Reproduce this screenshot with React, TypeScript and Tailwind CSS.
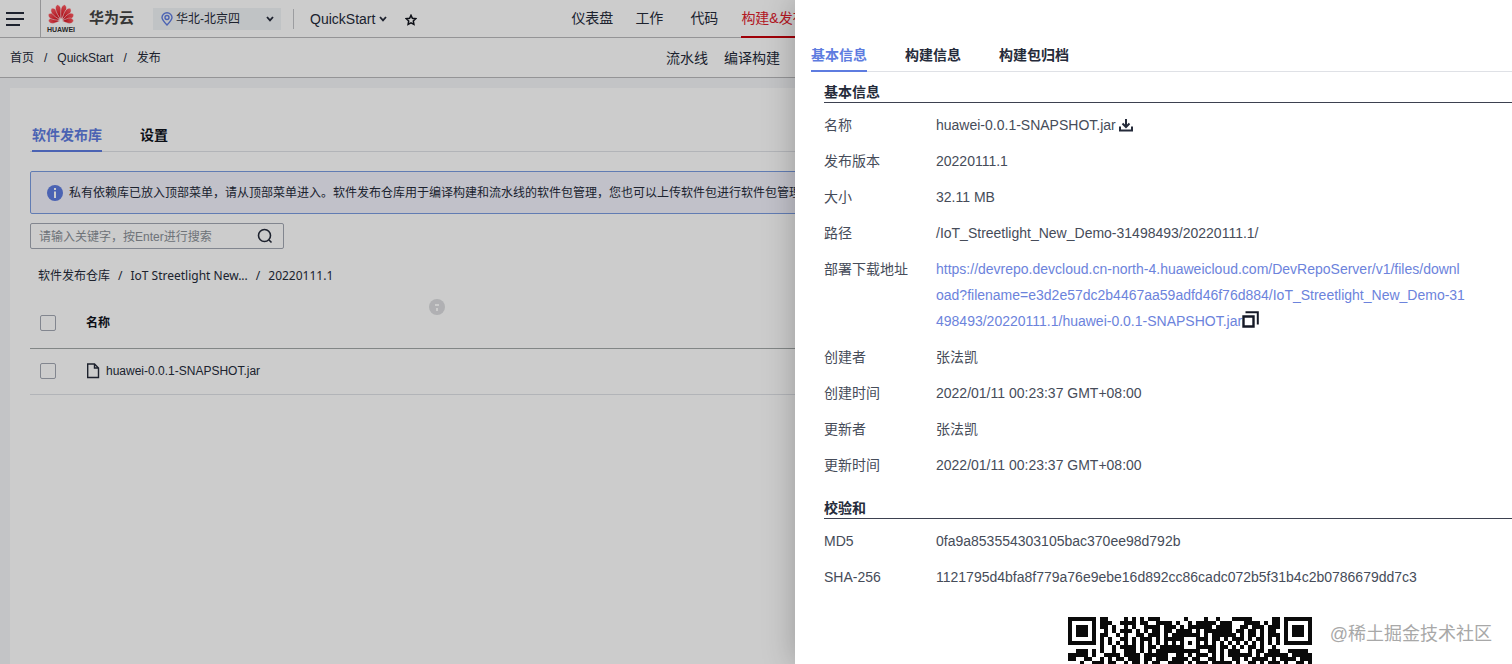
import { ReactNode } from 'react'

const finder = ['#######', '#.....#', '#.###.#', '#.###.#', '#.###.#', '#.....#', '#######']

const qrTop = [
    '.##....#.#.#.###......#....#..#...#####.....##.',
    '.###..####.##..####.#..#.#####.###...####.#.##.',
    '.##.#..#.#..####.###.#.######.####..##.###.###.',
    '..#.#.###.#.#.##.##.####.#.#######.##.##.#.##..',
    '.##..#.#..##.###.#.#######.#.######.#.##.#.###.',
    '.#.#..##.#.###.#.#####...###.##.#.###.#.##.#.#.',
    '.#.#.#.#.#.#.#.#.#.#.#.#.#.#.#.#.#.#.#.#.#.#.#.'
]

const qrRows = [
    ...qrTop.map((row, i) => finder[i] + row + finder[i]),
    '........#..#.####.#.##.######...#####.##.#.#.##.#..#.........',
    '..###.#.#..#..###.#.#.###########..##.#.###..#.##.###..#####.',
    '#####.#..####.####.######..##.#.###.#.#.######.#.######.#####',
    '##..##..#.#.##.###.##.###.####.##..##.#..##.#.####.#.####.###',
    '...#..###.##..#.##.#.##..####.#.###.#####.#..##.#.###.#..##.#'
]

const QrCode = () => (
    <svg viewBox="0 0 61 12" className="w-[244px] h-12 shrink-0" shapeRendering="crispEdges">
        {qrRows.map((row, y) =>
            row.split('').map((cell, x) =>
                cell === '#' ? <rect key={`${x}-${y}`} x={x} y={y} width="1" height="1" fill="#0a0a0a" /> : null
            )
        )}
    </svg>
)

const HuaweiLogo = () => (
    <div className="flex flex-col items-center w-10">
        <svg viewBox="0 0 28 22" className="w-7 h-[22px]">
            <defs>
                <radialGradient id="petal" gradientUnits="userSpaceOnUse" cx="0" cy="-14" r="13">
                    <stop offset="0" stopColor="#ff5a62" />
                    <stop offset="1" stopColor="#d0000f" />
                </radialGradient>
            </defs>
            {[
                [-88, 0.86],
                [-62, 0.98],
                [-37, 1.08],
                [-13, 1.15],
                [13, 1.15],
                [37, 1.08],
                [62, 0.98],
                [88, 0.86]
            ].map(([angle, length]) => (
                <path
                    key={angle}
                    d="M0 -1.500C-1.200 -4 -3 -8 -2.800 -11C-2.600 -13 -1.300 -14.200 0 -14.600C1.300 -14.200 2.600 -13 2.800 -11C3 -8 1.200 -4 0 -1.500Z"
                    fill="url(#petal)"
                    stroke="#fff"
                    strokeWidth=".5"
                    transform={`translate(14 18) rotate(${angle}) scale(.96 ${length})`}
                />
            ))}
        </svg>
        <span className="mt-px text-[7px] leading-[8px] font-bold text-[#333]">HUAWEI</span>
    </div>
)

const Chevron = () => (
    <svg viewBox="0 0 8 6" className="w-2 h-[6px]" fill="none" stroke="#252b3a" strokeWidth="1.8">
        <path d="M1 1l3 3.4L7 1" />
    </svg>
)

const Header = () => (
    <header className="flex items-center h-[38px] border-b border-[#b9babc] bg-white whitespace-nowrap">
        <button aria-label="菜单" className="flex items-center w-10 h-full pl-[6px] shrink-0">
            <svg viewBox="0 0 18 16" className="w-[18px] h-4" stroke="#252b3a" strokeWidth="2">
                <path d="M0 2h18M0 8h18M0 14h14" />
            </svg>
        </button>
        <a href="#" className="flex items-center h-full border-l border-[#b9babc] shrink-0">
            <HuaweiLogo />
            <span className="ml-2 text-[15px] font-bold text-[#444]">华为云</span>
        </a>
        <div className="relative flex items-center ml-[19px] h-[22px] w-[128px] bg-[#f1f4f7] shrink-0">
            <svg viewBox="0 0 12 14" className="absolute left-2 w-3 h-[14px]" fill="none" stroke="#5e7ce0" strokeWidth="1.4">
                <path d="M6 13C3 10 1 8 1 5.600a5 4.800 0 0 1 10 0C11 8 9 10 6 13Z" />
                <circle cx="6" cy="5.500" r="2" />
            </svg>
            <select aria-label="区域" className="w-full h-full pl-[23px] text-xs appearance-none bg-transparent text-[#252b3a]">
                <option>华北-北京四</option>
            </select>
            <span className="absolute right-[7px] pointer-events-none"><Chevron /></span>
        </div>
        <div className="ml-3 w-px h-5 bg-[#c3c5c9] shrink-0" />
        <button className="flex items-center gap-1 ml-4 text-sm text-[#252b3a]">
            QuickStart
            <Chevron />
        </button>
        <button aria-label="收藏" className="ml-[18px] mt-[2px]">
            <svg viewBox="0 0 12 12" className="w-3 h-3" fill="none" stroke="#10131c" strokeWidth="1.500">
                <path d="M6 1.300l1.400 3 3.300.4-2.400 2.300.6 3.400L6 8.800l-2.900 1.600.6-3.400L1.300 4.700l3.300-.4Z" />
            </svg>
        </button>
        <nav className="flex h-[38px] ml-[154px] text-sm leading-[37px] text-[#252b3a]">
            <a href="#" className="mr-[22px]">仪表盘</a>
            <a href="#" className="mr-[27px]">工作</a>
            <a href="#" className="mr-[23px]">代码</a>
            <a href="#" className="text-[#e0202c] border-b-2 border-[#c7000b]">构建&amp;发布</a>
        </nav>
    </header>
)

const SubHeader = () => (
    <div className="flex items-center h-10 pl-[10px] border-b border-[#b9babc] bg-white text-xs text-[#252b3a] whitespace-nowrap">
        <div className="flex gap-[10px] w-[656px] shrink-0">
            <a href="#">首页</a>
            <span>/</span>
            <a href="#">QuickStart</a>
            <span>/</span>
            <span>发布</span>
        </div>
        <nav className="flex gap-4 text-sm">
            <a href="#">流水线</a>
            <a href="#">编译构建</a>
        </nav>
    </div>
)

const Checkbox = ({ label }: { label: string }) => (
    <input
        type="checkbox"
        aria-label={label}
        className="block w-4 h-4 ml-[10px] appearance-none bg-white border border-[#a3a8b3] rounded-[2px]"
    />
)

const Repository = () => (
    <main className="flex-1 bg-[#f4f6f8] pt-[10px] pl-[10px]">
        <div className="h-full bg-white pl-5 pt-8">
            <div className="flex gap-[38px] h-8 pl-[2px] border-b border-[#dfe1e6] text-sm font-bold">
                <button className="h-8 border-b-2 border-[#5e7ce0] text-[#5e7ce0]">软件发布库</button>
                <button className="h-8 pb-[2px] text-[#10131c]">设置</button>
            </div>
            <div className="flex items-center h-[43px] mt-[19px] pl-4 border border-[#7a9be0] rounded-[2px] bg-[#f2f2fc] text-xs text-[#252b3a] whitespace-nowrap">
                <svg viewBox="0 0 16 16" className="w-4 h-4 mr-[6px] shrink-0">
                    <circle cx="8" cy="8" r="8" fill="#5e7ce0" />
                    <path d="M7 3h2v2H7zM7 6.500h2V13H7z" fill="#fff" />
                </svg>
                私有依赖库已放入顶部菜单，请从顶部菜单进入。软件发布仓库用于编译构建和流水线的软件包管理，您也可以上传软件包进行软件包管理。
            </div>
            <div className="flex items-center w-[254px] h-[26px] mt-[9px] border border-[#a3a8b3] rounded-[2px]">
                <input
                    aria-label="搜索"
                    placeholder="请输入关键字，按Enter进行搜索"
                    className="flex-1 min-w-0 pl-2 pt-px text-xs placeholder:text-[#8a9097] outline-none"
                />
                <button aria-label="开始搜索" className="px-[10px]">
                    <svg viewBox="0 0 16 16" className="w-4 h-4" fill="none" stroke="#252b3a" strokeWidth="1.600">
                        <circle cx="7.500" cy="7.500" r="6" />
                        <path d="M12 12l2.500 2.500" />
                    </svg>
                </button>
            </div>
            <div className="flex gap-2 mt-[17px] pl-2 text-xs leading-5 text-[#252b3a] font-['Noto_Sans','Noto_Sans_CJK_SC',sans-serif]">
                <a href="#">软件发布仓库</a>
                <span>/</span>
                <a href="#">IoT Streetlight New...</a>
                <span>/</span>
                <span>20220111.1</span>
            </div>
            <div className="pl-[399px] mt-[13px] h-0">
                <svg viewBox="0 0 16 16" className="w-4 h-4">
                    <circle cx="8" cy="8" r="8" fill="#dcdde0" />
                    <path d="M6 5h4v2H6zM7 9h2v3H7z" fill="#fff" />
                </svg>
            </div>
            <table className="w-full text-xs text-left">
                <thead>
                    <tr className="h-[49px] border-b border-[#a3a8a8]">
                        <th className="w-[56px]"><Checkbox label="全选" /></th>
                        <th className="font-bold text-[#10131c]">名称</th>
                    </tr>
                </thead>
                <tbody>
                    <tr className="h-[46px] border-b border-[#dfe1e6]">
                        <td><Checkbox label="huawei-0.0.1-SNAPSHOT.jar" /></td>
                        <td className="text-[#252b3a]">
                            <a href="#" className="flex items-center gap-[6px]">
                                <svg viewBox="0 0 14 16" className="w-[14px] h-4" fill="none" stroke="#252b3a" strokeWidth="1.400">
                                    <path d="M1.700 1H8.500L12.500 5V14.500H1.700ZM8.500 1V5H12.500" />
                                </svg>
                                huawei-0.0.1-SNAPSHOT.jar
                            </a>
                        </td>
                    </tr>
                </tbody>
            </table>
        </div>
    </main>
)

const Row = ({ label, children }: { label: string; children: ReactNode }) => (
    <div className="flex py-[5px]">
        <dt className="w-28 shrink-0">{label}</dt>
        <dd className="flex-1 min-w-0">{children}</dd>
    </div>
)

const SectionTitle = ({ children }: { children: ReactNode }) => (
    <h2 className="h-[22px] leading-[22px] border-b border-[#3d4150] text-sm font-bold text-[#252b3a]">{children}</h2>
)

const Drawer = () => (
    <aside className="absolute inset-y-0 right-0 w-[717px] overflow-hidden bg-white pl-4 pt-10 shadow-[0_0_30px_rgba(0,0,0,0.25)]">
        <div className="flex gap-[38px] h-8 border-b border-[#dfe1e6] text-sm font-bold text-[#252b3a]">
            <button className="h-8 border-b-2 border-[#5e7ce0] text-[#5e7ce0]">基本信息</button>
            <button className="h-8 pb-[2px]">构建信息</button>
            <button className="h-8 pb-[2px]">构建包归档</button>
        </div>
        <div className="pl-[13px] pt-[9px] text-sm leading-[26px] text-[#464c59]">
            <SectionTitle>基本信息</SectionTitle>
            <dl className="pt-1">
                <Row label="名称">
                    <span className="flex items-center gap-[2px]">
                        huawei-0.0.1-SNAPSHOT.jar
                        <button aria-label="下载">
                            <svg viewBox="0 0 16 14" className="w-4 h-[14px]" fill="none" stroke="#252b3a" strokeWidth="2">
                                <path d="M2 8.500V12.500H14V8.500M8 1V8.500M4.500 5.500L8 9L11.500 5.500" />
                            </svg>
                        </button>
                    </span>
                </Row>
                <Row label="发布版本">20220111.1</Row>
                <Row label="大小">32.11 MB</Row>
                <Row label="路径">/IoT_Streetlight_New_Demo-31498493/20220111.1/</Row>
                <Row label="部署下载地址">
                    <a href="#" className="text-[#6c83dc]">
                        https://devrepo.devcloud.cn-north-4.huaweicloud.com/DevRepoServer/v1/files/downl<br />
                        oad?filename=e3d2e57dc2b4467aa59adfd46f76d884/IoT_Streetlight_New_Demo-31<br />
                        498493/20220111.1/huawei-0.0.1-SNAPSHOT.jar
                    </a>
                    <button aria-label="复制" className="align-middle">
                        <svg viewBox="0 0 17 17" className="w-[17px] h-[17px] mb-[6px]" fill="none" stroke="#151926">
                            <path d="M1.500 5.500H11.500V15.500H1.500Z" strokeWidth="2.400" />
                            <path d="M3.500 1.200H15.800V13.500" strokeWidth="2" />
                        </svg>
                    </button>
                </Row>
                <Row label="创建者">张法凯</Row>
                <Row label="创建时间">2022/01/11 00:23:37 GMT+08:00</Row>
                <Row label="更新者">张法凯</Row>
                <Row label="更新时间">2022/01/11 00:23:37 GMT+08:00</Row>
            </dl>
            <div className="h-[14px]" />
            <SectionTitle>校验和</SectionTitle>
            <dl className="pt-1">
                <Row label="MD5">0fa9a853554303105bac370ee98d792b</Row>
                <Row label="SHA-256">1121795d4bfa8f779a76e9ebe16d892cc86cadc072b5f31b4c2b0786679dd7c3</Row>
            </dl>
            <div className="flex pl-[244px] pt-[22px]">
                <QrCode />
            </div>
        </div>
        <span className="absolute right-5 bottom-4 text-lg leading-7 text-[#a8a8a8]">@稀土掘金技术社区</span>
    </aside>
)

const App = () => {
    return (
        <div className="relative flex flex-col h-screen overflow-hidden font-['Liberation_Sans','Noto_Sans_CJK_SC',sans-serif]">
            <Header />
            <SubHeader />
            <Repository />
            <div className="absolute inset-0 bg-black/20" />
            <Drawer />
        </div>
    )
}

export default App
